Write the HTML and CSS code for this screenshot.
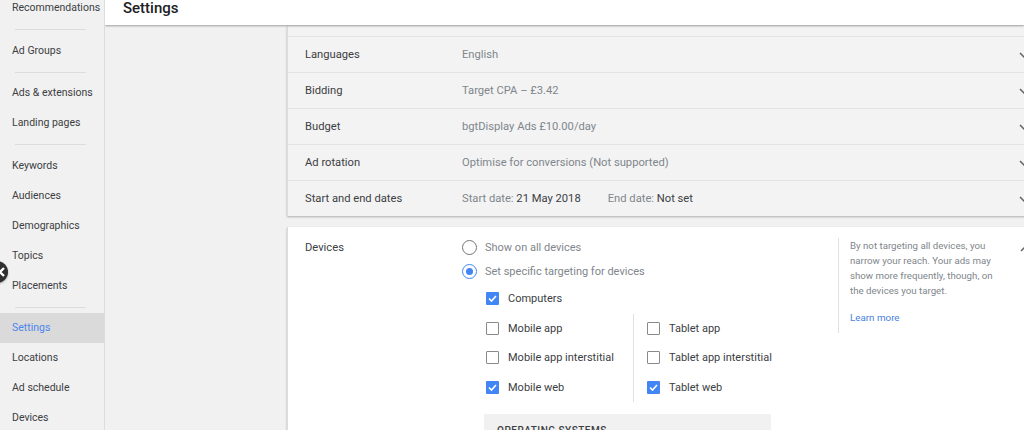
FILE: index.html
```html
<!DOCTYPE html>
<html lang="en">
<head>
<meta charset="utf-8">
<title>Settings</title>
<link rel="stylesheet" href="styles.css">
</head>
<body>
<div class="app">
  <nav class="sidebar">
    <ul class="nav-list">
      <li class="nav-item">Recommendations</li>
      <li class="nav-divider"></li>
      <li class="nav-item">Ad Groups</li>
      <li class="nav-divider"></li>
      <li class="nav-item">Ads &amp; extensions</li>
      <li class="nav-item">Landing pages</li>
      <li class="nav-divider"></li>
      <li class="nav-item">Keywords</li>
      <li class="nav-item">Audiences</li>
      <li class="nav-item">Demographics</li>
      <li class="nav-item">Topics</li>
      <li class="nav-item">Placements</li>
      <li class="nav-divider"></li>
      <li class="nav-item nav-item-active">Settings</li>
      <li class="nav-item">Locations</li>
      <li class="nav-item">Ad schedule</li>
      <li class="nav-item">Devices</li>
    </ul>
    <div class="collapse-btn">
      <svg width="10" height="10" viewBox="0 0 10 10"><polyline points="7,1 3,5 7,9" fill="none" stroke="#fff" stroke-width="2.4"/></svg>
    </div>
  </nav>
  <main class="main">
    <header class="page-header"><h1 class="page-title">Settings</h1></header>
    <div class="content">
      <section class="card card-summary">
        <div class="summary-top"></div>
        <div class="row">
          <div class="row-label">Languages</div>
          <div class="row-value">English</div>
          <svg class="chev" width="10" height="6" viewBox="0 0 10 6"><polyline points="1,1 5,5 9,1" fill="none" stroke="#5f6368" stroke-width="1.5"/></svg>
        </div>
        <div class="row">
          <div class="row-label">Bidding</div>
          <div class="row-value">Target CPA – £3.42</div>
          <svg class="chev" width="10" height="6" viewBox="0 0 10 6"><polyline points="1,1 5,5 9,1" fill="none" stroke="#5f6368" stroke-width="1.5"/></svg>
        </div>
        <div class="row">
          <div class="row-label">Budget</div>
          <div class="row-value">bgtDisplay Ads £10.00/day</div>
          <svg class="chev" width="10" height="6" viewBox="0 0 10 6"><polyline points="1,1 5,5 9,1" fill="none" stroke="#5f6368" stroke-width="1.5"/></svg>
        </div>
        <div class="row">
          <div class="row-label">Ad rotation</div>
          <div class="row-value">Optimise for conversions (Not supported)</div>
          <svg class="chev" width="10" height="6" viewBox="0 0 10 6"><polyline points="1,1 5,5 9,1" fill="none" stroke="#5f6368" stroke-width="1.5"/></svg>
        </div>
        <div class="row row-last">
          <div class="row-label">Start and end dates</div>
          <div class="row-value"><span>Start date: <b class="strong">21 May 2018</b></span><span class="end-date">End date: <b class="strong">Not set</b></span></div>
          <svg class="chev" width="10" height="6" viewBox="0 0 10 6"><polyline points="1,1 5,5 9,1" fill="none" stroke="#5f6368" stroke-width="1.5"/></svg>
        </div>
      </section>

      <section class="card card-devices">
        <div class="row-label devices-label">Devices</div>
        <div class="devices-options">
          <div class="radio-row"><span class="radio"></span><span class="radio-text">Show on all devices</span></div>
          <div class="radio-row"><span class="radio radio-on"></span><span class="radio-text">Set specific targeting for devices</span></div>
          <div class="check-row check-single"><span class="check check-on"><svg width="13" height="13" viewBox="0 0 13 13"><polyline points="3,6.5 5.5,9 10,4" fill="none" stroke="#fff" stroke-width="1.6"/></svg></span><span class="check-text">Computers</span></div>
          <div class="check-grid">
            <div class="check-col">
              <div class="check-row"><span class="check"></span><span class="check-text">Mobile app</span></div>
              <div class="check-row"><span class="check"></span><span class="check-text">Mobile app interstitial</span></div>
              <div class="check-row"><span class="check check-on"><svg width="13" height="13" viewBox="0 0 13 13"><polyline points="3,6.5 5.5,9 10,4" fill="none" stroke="#fff" stroke-width="1.6"/></svg></span><span class="check-text">Mobile web</span></div>
            </div>
            <div class="check-col check-col-right">
              <div class="check-row"><span class="check"></span><span class="check-text">Tablet app</span></div>
              <div class="check-row"><span class="check"></span><span class="check-text">Tablet app interstitial</span></div>
              <div class="check-row"><span class="check check-on"><svg width="13" height="13" viewBox="0 0 13 13"><polyline points="3,6.5 5.5,9 10,4" fill="none" stroke="#fff" stroke-width="1.6"/></svg></span><span class="check-text">Tablet web</span></div>
            </div>
          </div>
          <div class="os-box"><span class="os-title">OPERATING SYSTEMS</span></div>
        </div>
        <aside class="devices-help">
          <p class="help-text">By not targeting all devices, you narrow your reach. Your ads may show more frequently, though, on the devices you target.</p>
          <a class="help-link">Learn more</a>
        </aside>
        <svg class="chev chev-up" width="10" height="6" viewBox="0 0 10 6"><polyline points="1,5 5,1 9,5" fill="none" stroke="#5f6368" stroke-width="1.5"/></svg>
      </section>
    </div>
  </main>
</div>
</body>
</html>
```

FILE: styles.css
```css
* { box-sizing: border-box; }
html, body { margin: 0; padding: 0; }
body {
  font-family: Roboto, "Liberation Sans", Arial, sans-serif;
  background: #f1f1f1;
  color: #3c4043;
  width: 1024px;
  height: 430px;
  overflow: hidden;
}
.app {
  display: flex;
  height: 430px;
  overflow: hidden;
}
.sidebar {
  position: relative;
  width: 105px;
  flex: 0 0 105px;
  background: #f1f1f1;
  border-right: 1px solid #dcdcdc;
}
.nav-list {
  list-style: none;
  margin: -7px 0 0 0;
  padding: 0;
}
.nav-item {
  height: 30px;
  line-height: 30px;
  padding-left: 12px;
  font-size: 10.5px;
  color: #3c4043;
  white-space: nowrap;
}
.nav-item-active {
  background: #dadada;
  color: #4a86ee;
}
.nav-divider {
  height: 1px;
  background: #dadce0;
  margin: 6px 18px 5.5px 15px;
}
.collapse-btn {
  position: absolute;
  left: -14px;
  top: 261px;
  width: 22px;
  height: 22px;
  border-radius: 50%;
  background: #2f2f2f;
  display: flex;
  align-items: center;
  justify-content: flex-end;
  padding-right: 1px;
  box-shadow: 0 1px 2px rgba(0,0,0,.3);
}
.main {
  flex: 1 1 auto;
  display: flex;
  flex-direction: column;
  min-width: 0;
  overflow: hidden;
}
.page-header {
  height: 25px;
  flex: 0 0 25px;
  background: #fff;
  box-shadow: 0 1px 2px rgba(0,0,0,.35);
  padding-left: 18px;
  position: relative;
  z-index: 1;
}
.page-title {
  margin: 0;
  font-size: 15px;
  font-weight: 500;
  line-height: 16px;
  color: #202124;
}
.content {
  padding: 1px 0 0 182px;
  display: flex;
  flex-direction: column;
  gap: 11px;
}
.card {
  width: 750px;
  flex: 0 0 auto;
  border-left: 1px solid #dcdcdc;
  box-shadow: 0 1px 2px rgba(0,0,0,.28);
}
.card-summary {
  background: #f3f3f3;
}
.summary-top {
  height: 11px;
  border-bottom: 1px solid #e4e4e4;
}
.row {
  display: flex;
  align-items: center;
  height: 36px;
  padding-left: 17px;
  border-bottom: 1px solid #e2e2e2;
  font-size: 11.2px;
}
.row-last { border-bottom: none; height: 35px; }
.row-label {
  width: 157px;
  flex: 0 0 157px;
  color: #3c4043;
  font-size: 11.2px;
}
.row-value {
  flex: 1 1 auto;
  color: #80868b;
  white-space: nowrap;
}
.strong {
  font-weight: 400;
  color: #3c4043;
}
.end-date { margin-left: 27px; }
.chev {
  flex: 0 0 10px;
  margin-right: 8px;
}
.card-devices {
  background: #fff;
  display: flex;
  align-items: flex-start;
  padding: 14px 0 0 17px;
  height: 230px;
}
.devices-label {
  line-height: 14px;
}
.devices-options {
  width: 376px;
  flex: 0 0 376px;
}
.radio-row {
  display: flex;
  align-items: center;
  height: 24px;
  margin-top: -6px;
  margin-bottom: 6px;
}
.radio-row + .radio-row { margin-top: -6px; }
.radio {
  width: 15px;
  height: 15px;
  border-radius: 50%;
  border: 1.5px solid #757575;
  margin-right: 8px;
  flex: 0 0 15px;
  display: flex;
  align-items: center;
  justify-content: center;
}
.radio-on { border-color: #4285f4; }
.radio-on::after {
  content: "";
  width: 7px;
  height: 7px;
  border-radius: 50%;
  background: #4285f4;
}
.radio-text {
  font-size: 11px;
  color: #80868b;
}
.check-row {
  display: flex;
  align-items: center;
  height: 29.5px;
}
.check-single {
  margin-left: 24px;
  margin-top: -5px;
}
.check {
  width: 13px;
  height: 13px;
  border: 1.5px solid #8a8a8a;
  border-radius: 1px;
  margin-right: 9px;
  flex: 0 0 13px;
  display: flex;
}
.check-on {
  border: none;
  background: #4285f4;
}
.check-text {
  font-size: 11px;
  color: #3c4043;
}
.check-grid {
  display: flex;
  margin-left: 24px;
}
.check-col {
  width: 147px;
}
.check-col-right {
  width: auto;
  border-left: 1px solid #e0e0e0;
  padding-left: 13px;
}
.os-box {
  margin: 12px 0 0 22px;
  width: 287px;
  height: 20px;
  background: #f1f1f1;
  padding: 12px 0 0 13px;
  overflow: hidden;
}
.os-title {
  font-size: 10px;
  font-weight: 500;
  letter-spacing: .5px;
  color: #3c4043;
  line-height: 10px;
  display: block;
}
.devices-help {
  width: 178px;
  flex: 0 0 178px;
  border-left: 1px solid #e0e0e0;
  padding: 0 0 8px 11px;
  margin-top: -3px;
}
.help-text {
  margin: 0;
  font-size: 9.7px;
  line-height: 15px;
  color: #80868b;
  width: 150px;
}
.help-link {
  display: block;
  margin-top: 12px;
  font-size: 9.8px;
  color: #4a7fe0;
  line-height: 15px;
}
.chev-up {
  margin-left: 4px;
  margin-top: 5px;
}
```
